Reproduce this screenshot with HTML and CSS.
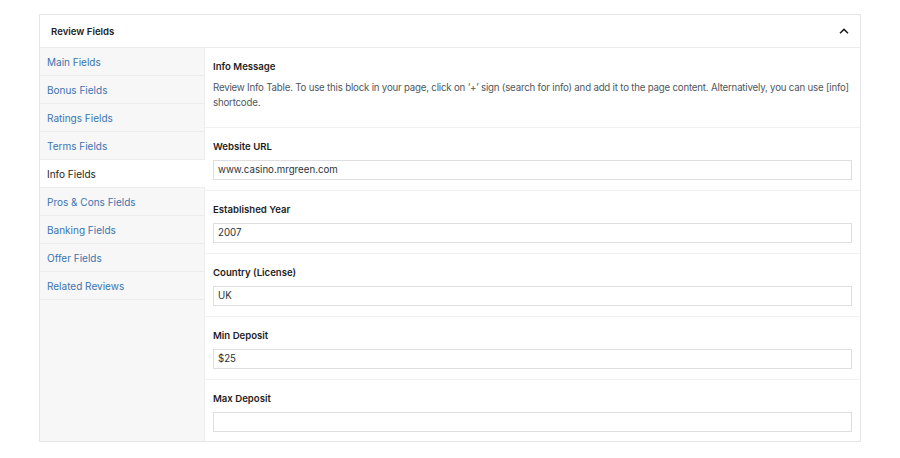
FILE: index.html
```html
<!DOCTYPE html>
<html>
<head>
<meta charset="utf-8">
<link rel="stylesheet" href="styles.css">
</head>
<body>
<div class="page">
  <div class="box">
    <div class="box-head">
      <span class="box-title">Review Fields</span>
      <svg class="chev" width="10" height="6" viewBox="0 0 10 6"><path d="M1 5.2 L5 1.4 L9 5.2" fill="none" stroke="#1e1e1e" stroke-width="1.5"/></svg>
    </div>
    <div class="box-body">
      <ul class="tabs">
        <li><a>Main Fields</a></li>
        <li><a>Bonus Fields</a></li>
        <li><a>Ratings Fields</a></li>
        <li><a>Terms Fields</a></li>
        <li class="active"><a>Info Fields</a></li>
        <li><a>Pros &amp; Cons Fields</a></li>
        <li><a>Banking Fields</a></li>
        <li><a>Offer Fields</a></li>
        <li><a>Related Reviews</a></li>
      </ul>
      <div class="fields">
        <div class="field field-msg">
          <div class="label">Info Message</div>
          <p class="desc">Review Info Table. To use this block in your page, click on ‘+’ sign (search for info) and add it to the page content. Alternatively, you can use [info] shortcode.</p>
        </div>
        <div class="field">
          <div class="label">Website URL</div>
          <div class="input">www.casino.mrgreen.com</div>
        </div>
        <div class="field">
          <div class="label">Established Year</div>
          <div class="input">2007</div>
        </div>
        <div class="field">
          <div class="label">Country (License)</div>
          <div class="input">UK</div>
        </div>
        <div class="field">
          <div class="label">Min Deposit</div>
          <div class="input">$25</div>
        </div>
        <div class="field">
          <div class="label">Max Deposit</div>
          <div class="input"></div>
        </div>
      </div>
    </div>
  </div>
</div>
</body>
</html>
```
FILE: styles.css
```css
html, body {
  margin: 0;
  padding: 0;
  background: #fff;
}
body {
  font-family: Inter, "Liberation Sans", sans-serif;
  font-size: 10px;
  color: #1e1e1e;
}
.page {
  padding: 14px 39px 0 39px;
}
.box {
  border: 1px solid #e6e6e6;
  background: #fff;
}
.box-head {
  height: 32px;
  border-bottom: 1px solid #ececec;
  display: flex;
  align-items: center;
  justify-content: space-between;
  padding: 0 11px 0 11px;
}
.box-title {
  font-weight: 600;
  font-size: 9.6px;
}
.chev {
  display: block;
}
.box-body {
  display: flex;
}
.tabs {
  list-style: none;
  margin: 0;
  padding: 0;
  width: 164px;
  flex: none;
  background: #f7f7f7;
  border-right: 1px solid #ececec;
}
.tabs li {
  height: 27px;
  border-bottom: 1px solid #ececec;
  display: flex;
  align-items: center;
  padding-left: 7px;
  margin-right: -1px;
}
.tabs li a {
  color: #3a74b0;
  font-size: 10px;
}
.tabs li.active {
  background: #fff;
}
.tabs li.active a {
  color: #1e1e1e;
}
.fields {
  flex: 1;
  min-width: 0;
}
.field {
  padding: 12px 8px 10px 8px;
  border-bottom: 1px solid #f0f0f0;
}
.field:last-child {
  border-bottom: none;
  padding-bottom: 9px;
}
.field-msg {
  padding-top: 12px;
  padding-bottom: 17px;
  padding-right: 4px;
}
.label {
  font-weight: 600;
  font-size: 9.6px;
  line-height: 14px;
  margin-bottom: 6px;
}
.desc {
  margin: 0;
  color: #50575e;
  font-size: 9.7px;
  letter-spacing: -0.2px;
  line-height: 15px;
}
.input {
  height: 18px;
  border: 1px solid #dedede;
  line-height: 18px;
  padding: 0 4px;
  font-size: 9.7px;
  color: #2c3338;
}
```
